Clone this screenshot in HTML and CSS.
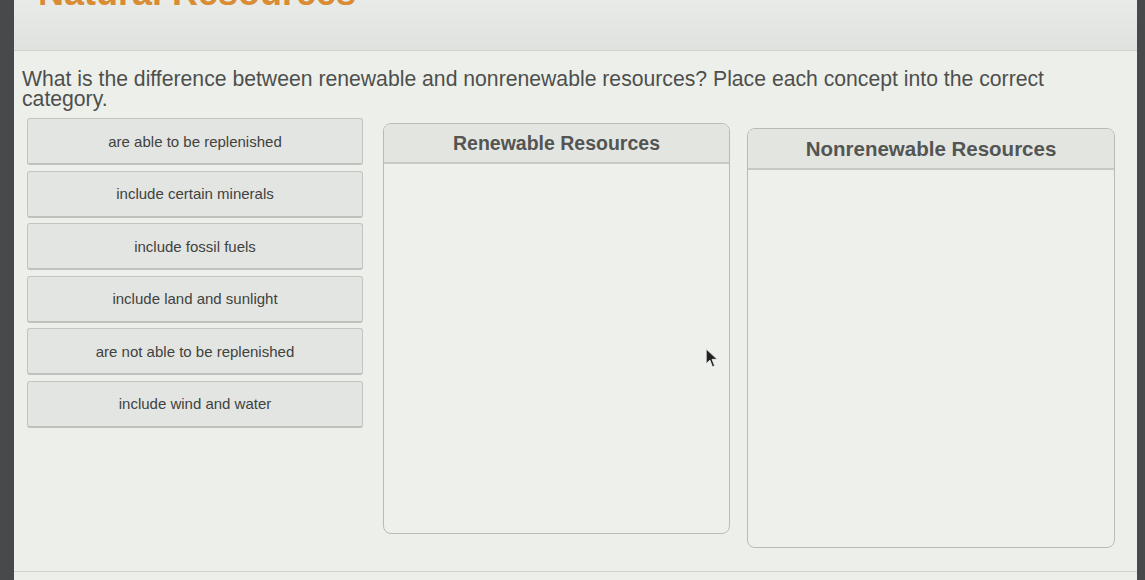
FILE: index.html
```html
<!DOCTYPE html>
<html lang="en">
<head>
<meta charset="utf-8">
<title>Natural Resources</title>
<link rel="stylesheet" href="styles.css">
</head>
<body>
<div class="screen">
  <header class="header">
    <h1 class="title">Natural Resources</h1>
  </header>
  <p class="question">What is the difference between renewable and nonrenewable resources? Place each concept into the correct category.</p>
  <div class="workspace">
    <div class="cards">
      <div class="card">are able to be replenished</div>
      <div class="card">include certain minerals</div>
      <div class="card">include fossil fuels</div>
      <div class="card">include land and sunlight</div>
      <div class="card">are not able to be replenished</div>
      <div class="card">include wind and water</div>
    </div>
    <div class="bin bin-renew">
      <div class="bin-head">Renewable Resources</div>
      <div class="bin-body"></div>
    </div>
    <div class="bin bin-nonrenew">
      <div class="bin-head">Nonrenewable Resources</div>
      <div class="bin-body"></div>
    </div>
  </div>
  <svg class="cursor" width="15" height="21" viewBox="0 0 14 20"><path d="M1 1 L1 15 L4.5 11.5 L7 18 L9 17 L6.6 10.8 L11.5 10.8 Z" fill="#222" stroke="#eee" stroke-width="0.8"/></svg>
  <div class="bottom-line"></div>
</div>
</body>
</html>
```
FILE: styles.css
```css
html, body {
  margin: 0;
  padding: 0;
}
body {
  background: #48494b;
  width: 1145px;
  height: 580px;
  overflow: hidden;
  font-family: "Liberation Sans", Arial, sans-serif;
}
.screen {
  position: relative;
  margin-left: 14px;
  margin-right: 8px;
  height: 580px;
  background: #edefeb;
  overflow: hidden;
}
.header {
  height: 50px;
  background: linear-gradient(#e9ebe8, #e0e2df);
  border-bottom: 1px solid #cfd1cd;
  overflow: hidden;
}
.title {
  margin: -27px 0 0 24px;
  font-size: 36px;
  line-height: 40px;
  font-weight: bold;
  color: #d98c34;
}
.question {
  margin: 18px 0 0 8px;
  width: 1060px;
  font-size: 21.2px;
  line-height: 20px;
  color: #4d4f4d;
}
.workspace {
  display: flex;
  align-items: flex-start;
  margin-top: 9px;
  padding-left: 13px;
}
.cards {
  width: 336px;
  display: flex;
  flex-direction: column;
  gap: 5.6px;
}
.card {
  box-sizing: border-box;
  height: 47px;
  display: flex;
  align-items: center;
  justify-content: center;
  background: #e3e5e2;
  border: 1px solid #c3c5c1;
  border-bottom: 2px solid #bfc1bd;
  border-radius: 3px;
  font-size: 15px;
  color: #404240;
}
.bin {
  box-sizing: border-box;
  display: flex;
  flex-direction: column;
  border: 1px solid #b9bbb7;
  border-radius: 8px;
  overflow: hidden;
  background: #eef0ec;
}
.bin-renew {
  width: 347px;
  height: 411px;
  margin-left: 20px;
  margin-top: 5px;
}
.bin-nonrenew {
  width: 368px;
  height: 420px;
  margin-left: 17px;
  margin-top: 10px;
}
.bin-head {
  box-sizing: border-box;
  height: 40px;
  display: flex;
  align-items: center;
  justify-content: center;
  background: #e3e5e1;
  border-bottom: 2px solid #c7c9c5;
  font-weight: bold;
  font-size: 19.5px;
  color: #535553;
}
.bin-nonrenew .bin-head {
  height: 41px;
  font-size: 20.5px;
}
.bin-body {
  flex: 1;
}
.cursor {
  position: absolute;
  left: 691px;
  top: 348px;
}
.bottom-line {
  position: absolute;
  left: 0;
  right: 0;
  top: 571px;
  height: 1px;
  background: #d0d2ce;
}
```
